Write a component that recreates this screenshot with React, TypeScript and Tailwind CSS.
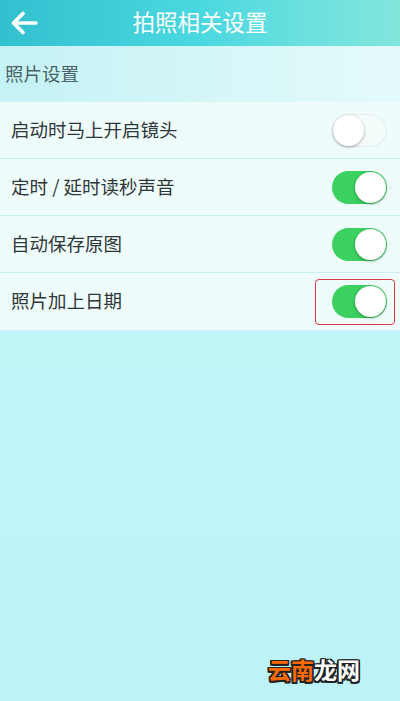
import React from "react";

const font = { fontFamily: '"Noto Sans CJK SC", "Noto Sans", sans-serif' };

function Toggle({ on }: { on: boolean }) {
  return on ? (
    <div className="relative w-[55px] h-[33px] rounded-full bg-[#3ad15f]">
      <div className="absolute right-[1px] top-[1px] w-[31px] h-[31px] rounded-full bg-white shadow-[0_1px_3px_rgba(0,0,0,0.35)]" />
    </div>
  ) : (
    <div className="relative w-[55px] h-[33px] rounded-full bg-[#f4fbfb] border border-[#e2eaea]">
      <div className="absolute left-0 top-0 w-[31px] h-[31px] rounded-full bg-white shadow-[0_1px_3px_rgba(0,0,0,0.35)]" />
    </div>
  );
}

const rows = [
  { label: "启动时马上开启镜头", on: false },
  { label: "定时 / 延时读秒声音", on: true },
  { label: "自动保存原图", on: true },
  { label: "照片加上日期", on: true, mark: true },
];

const outline =
  "[text-shadow:-1.5px_-1.5px_0_#222,1.5px_-1.5px_0_#222,-1.5px_1.5px_0_#222,1.5px_1.5px_0_#222,0_1.5px_0_#222,0_-1.5px_0_#222,1.5px_0_0_#222,-1.5px_0_0_#222]";

export default function App() {
  return (
    <div
      className="w-[400px] h-[701px] flex flex-col bg-gradient-to-b from-[#c6f4f7] via-[#c1f5f8] to-[#bdf3f8] relative overflow-hidden"
      style={font}
    >
      <div className="h-[46px] shrink-0 flex items-center bg-gradient-to-r from-[#33c0cf] via-[#4ad8e0] to-[#82e6dc] relative">
        <svg className="ml-[11px]" width="27" height="24" viewBox="0 0 27 24" fill="none">
          <path d="M25 12H3M12 2.5L2.5 12L12 21.5" stroke="white" strokeWidth="3.6" strokeLinecap="round" strokeLinejoin="round" />
        </svg>
        <div className="absolute inset-0 flex items-center justify-center text-white text-[22.5px] pb-[2px]">
          拍照相关设置
        </div>
      </div>
      <div className="h-[56px] shrink-0 flex items-center pl-[5px] text-[18.5px] text-[#4a6266] bg-gradient-to-r from-[#c4f2f5] to-[#e4fafa]">
        照片设置
      </div>
      <div className="flex flex-col bg-[#effcfc]">
        {rows.map((r, i) => (
          <div
            key={i}
            className={`h-[57px] flex items-center justify-between pl-[11px] pr-[13px] ${i < rows.length - 1 ? "border-b border-[#c9eef2]" : ""}`}
          >
            <span className="text-[18.5px] text-[#2f3637] pb-[1px]">{r.label}</span>
            <div className="relative">
              <Toggle on={r.on} />
              {r.mark && (
                <div className="absolute -left-[17px] -top-[6px] w-[80px] h-[46px] border-[1.5px] border-[#d93a3f] rounded-[4px]" />
              )}
            </div>
          </div>
        ))}
      </div>
      <div className="flex-1" />
      <div
        className="absolute left-[268px] top-[658px] text-[23px] font-bold leading-none"
        style={{ fontFamily: '"Noto Sans CJK SC", sans-serif' }}
      >
        <span className={`text-[#ff6a00] ${outline}`}>云南</span>
        <span className={`text-white ${outline}`}>龙网</span>
      </div>
    </div>
  );
}
